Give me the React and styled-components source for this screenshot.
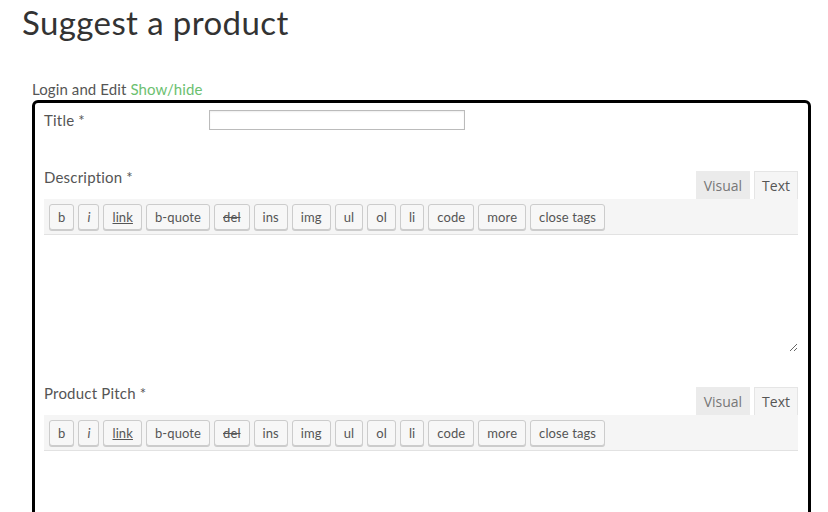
import styled, { createGlobalStyle } from "styled-components";

const GlobalStyle = createGlobalStyle`
  body {
    margin: 0;
    background: #fff;
    font-family: Lato, "Noto Sans", sans-serif;
    color: #444;
  }
`;

const Page = styled.div`
  padding: 0 17px 0 32px;
  height: 512px;
  overflow: hidden;
`;

const Heading = styled.h1`
  margin: 0 0 0 -10px;
  font-size: 33px;
  line-height: 44px;
  font-weight: 400;
  letter-spacing: 0.4px;
  color: #333;
`;

const LoginLine = styled.div`
  margin-top: 35px;
  font-size: 15px;
  line-height: 20px;
  letter-spacing: 0.1px;
  color: #555;
`;

const ToggleLink = styled.a`
  color: #6cc070;
  text-decoration: none;
  cursor: pointer;
`;

const FormBox = styled.div`
  margin-top: 1px;
  border: 3px solid #000;
  border-radius: 6px;
  padding: 7px 10px 40px 9px;
`;

const FieldRow = styled.div`
  display: flex;
  align-items: center;
  height: 20px;
`;

const Label = styled.label`
  font-size: 15px;
  line-height: 20px;
  color: #555;
  letter-spacing: 0.2px;
  width: ${(p) => p.$width || "auto"};
  flex-shrink: 0;
`;

const TextInput = styled.input`
  width: 256px;
  height: 20px;
  box-sizing: border-box;
  border: 1px solid #bbb;
  box-shadow: inset 0 1px 2px rgba(0, 0, 0, 0.07);
  padding: 0 4px;
  font-family: inherit;
`;

const Editor = styled.div`
  margin-top: ${(p) => p.$gap}px;
`;

const EditorHeader = styled.div`
  display: flex;
  justify-content: space-between;
  align-items: flex-end;
  height: 31px;
`;

const HeaderLabel = styled(Label)`
  align-self: flex-start;
  margin-top: -1px;
`;

const Tabs = styled.div`
  display: flex;
  gap: 4px;
`;

const Tab = styled.button`
  height: 28px;
  box-sizing: border-box;
  padding: 0 7px;
  font-family: "Open Sans", sans-serif;
  font-size: 14px;
  border: 1px solid ${(p) => (p.$active ? "#e5e5e5" : "#ebebeb")};
  border-bottom: none;
  background: ${(p) => (p.$active ? "#f5f5f5" : "#ebebeb")};
  color: ${(p) => (p.$active ? "#555" : "#777")};
  cursor: pointer;
`;

const Toolbar = styled.div`
  display: flex;
  gap: 4px;
  padding: 5px 5px 4px;
  background: #f5f5f5;
  border-bottom: 1px solid #e2e2e2;
`;

const QButton = styled.button`
  height: 26px;
  box-sizing: border-box;
  padding: 0 8px;
  font-family: Lato, "Noto Sans", sans-serif;
  font-size: 13px;
  letter-spacing: 0.1px;
  color: #555;
  background: #f7f7f7;
  border: 1px solid #ccc;
  border-radius: 3px;
  box-shadow: 0 1px 0 #ccc;
  text-decoration: ${(p) => p.$deco || "none"};
  font-style: ${(p) => (p.$italic ? "italic" : "normal")};
  cursor: pointer;
`;

const TextArea = styled.textarea`
  display: block;
  width: 100%;
  box-sizing: border-box;
  height: 117px;
  border: none;
  outline: none;
  resize: vertical;
  padding: 8px;
  font-family: inherit;
`;

const buttons = [
  { label: "b" },
  { label: "i", italic: true },
  { label: "link", deco: "underline" },
  { label: "b-quote" },
  { label: "del", deco: "line-through" },
  { label: "ins" },
  { label: "img" },
  { label: "ul" },
  { label: "ol" },
  { label: "li" },
  { label: "code" },
  { label: "more" },
  { label: "close tags" },
];

function TextEditor({ label, gap }) {
  return (
    <Editor $gap={gap}>
      <EditorHeader>
        <HeaderLabel>{label}</HeaderLabel>
        <Tabs>
          <Tab>Visual</Tab>
          <Tab $active>Text</Tab>
        </Tabs>
      </EditorHeader>
      <Toolbar>
        {buttons.map((b) => (
          <QButton key={b.label} $italic={b.italic} $deco={b.deco}>
            {b.label}
          </QButton>
        ))}
      </Toolbar>
      <TextArea />
    </Editor>
  );
}

export default function App() {
  return (
    <>
      <GlobalStyle />
      <Page>
        <Heading>Suggest a product</Heading>
        <LoginLine>
          Login and Edit <ToggleLink>Show/hide</ToggleLink>
        </LoginLine>
        <FormBox>
          <FieldRow>
            <Label $width="165px">Title *</Label>
            <TextInput type="text" />
          </FieldRow>
          <TextEditor label="Description *" gap={38} />
          <TextEditor label="Product Pitch *" gap={32} />
        </FormBox>
      </Page>
    </>
  );
}
